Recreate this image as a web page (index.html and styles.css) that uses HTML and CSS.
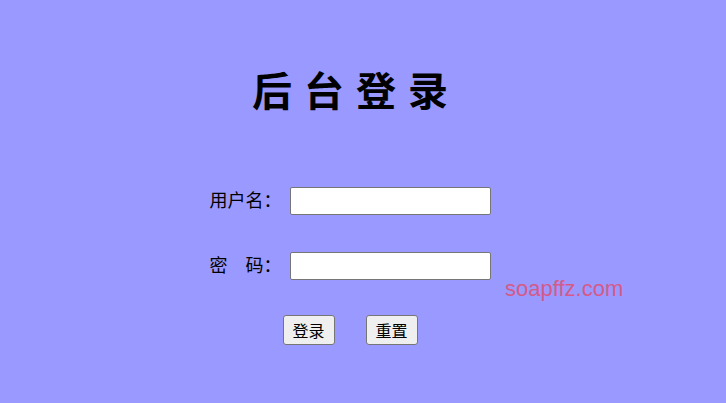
FILE: index.html
```html
<!DOCTYPE html>
<html lang="zh-CN">
<head>
<meta charset="utf-8">
<title>后台登录</title>
<link rel="stylesheet" href="styles.css">
</head>
<body>
<main class="page">
  <h1 class="title">后台登录</h1>
  <form class="form">
    <div class="row">
      <label class="label" for="user">用户名：</label>
      <input class="input" id="user" type="text">
    </div>
    <div class="row">
      <label class="label" for="pass">密　码：</label>
      <input class="input" id="pass" type="password">
    </div>
    <div class="actions">
      <button class="btn" type="submit">登录</button>
      <button class="btn" type="reset">重置</button>
    </div>
  </form>
</main>
<div class="watermark">soapffz.com</div>
</body>
</html>
```
FILE: styles.css
```css
html, body {
  margin: 0;
  padding: 0;
  height: 100%;
}
body {
  background: #9999ff;
  font-family: "Noto Sans CJK SC", "Noto Sans", sans-serif;
  color: #000;
  position: relative;
  overflow: hidden;
}
.page {
  width: 700px;
  display: flex;
  flex-direction: column;
  align-items: center;
  padding-top: 64px;
}
.title {
  margin: 0 -12px 0 0;
  font-size: 40px;
  line-height: 50px;
  font-weight: bold;
  letter-spacing: 12px;
}
.form {
  margin-top: 73px;
  display: flex;
  flex-direction: column;
  align-items: center;
  gap: 37px;
}
.row {
  display: flex;
  align-items: center;
}
.label {
  width: 80px;
  font-size: 18px;
  line-height: 24px;
  padding-bottom: 4px;
}
.input {
  box-sizing: border-box;
  width: 201px;
  height: 28px;
  margin: 0;
  border: 1px solid #767676;
  border-radius: 2px;
  background: #fff;
  padding: 0 4px;
}
.actions {
  display: flex;
  gap: 31px;
  margin-top: -2px;
}
.btn {
  box-sizing: border-box;
  width: 52px;
  height: 30px;
  margin: 0;
  padding: 0;
  font-family: "Noto Sans CJK SC", sans-serif;
  font-size: 16px;
  line-height: 28px;
  color: #000;
  background: #efefef;
  border: 1px solid #767676;
  border-radius: 3px;
}
.watermark {
  position: absolute;
  left: 505px;
  top: 276px;
  font-family: "Liberation Sans", Arial, sans-serif;
  font-size: 22px;
  line-height: 26px;
  color: #d65a88;
}
```
